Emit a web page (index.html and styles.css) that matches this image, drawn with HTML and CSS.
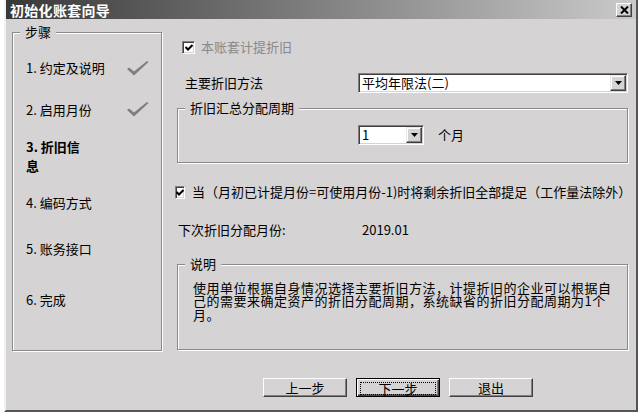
FILE: index.html
```
<!DOCTYPE html>
<html lang="zh-CN">

<head>
    <meta charset="UTF-8">
    <title>初始化账套向导</title>
    <link rel="stylesheet" href="styles.css">
</head>

<body>
    <div class="dialog">
        <div class="titlebar">
            <span class="title">初始化账套向导</span>
            <span class="close-btn">
                <svg width="9" height="8" viewBox="0 0 9 8"><path d="M1 0.5 L8 7.5 M8 0.5 L1 7.5" stroke="#000" stroke-width="2"/></svg>
            </span>
        </div>

        <div class="main">
            <fieldset class="group steps">
                <legend>步骤</legend>
                <ol class="step-list">
                    <li class="step"><span class="step-name">1. 约定及说明</span><svg class="done" width="22" height="15" viewBox="0 0 22 15"><path d="M0 8 L2 6.5 L7 10.5 L20 0 L21.5 1 L7 14.5 Z" fill="#7f7f7f"/></svg></li>
                    <li class="step"><span class="step-name">2. 启用月份</span><svg class="done" width="22" height="15" viewBox="0 0 22 15"><path d="M0 8 L2 6.5 L7 10.5 L20 0 L21.5 1 L7 14.5 Z" fill="#7f7f7f"/></svg></li>
                    <li class="step step-current"><span class="step-name">3. 折旧信<br>息</span></li>
                    <li class="step"><span class="step-name">4. 编码方式</span></li>
                    <li class="step"><span class="step-name">5. 账务接口</span></li>
                    <li class="step"><span class="step-name">6. 完成</span></li>
                </ol>
            </fieldset>

            <div class="settings">
                <div class="check-row first-check is-disabled">
                    <span class="checkbox"><svg width="8" height="7" viewBox="0 0 8 7"><path d="M0.5 3 L3 5.5 L7.5 1" stroke="#000" stroke-width="2" fill="none"/></svg></span>
                    <span>本账套计提折旧</span>
                </div>

                <div class="field-row method-row">
                    <span class="field-label">主要折旧方法</span>
                    <div class="combo combo-wide">
                        <span class="combo-text">平均年限法(二)</span>
                        <span class="combo-btn"><svg width="7" height="4" viewBox="0 0 7 4"><path d="M0 0 H7 L3.5 4 Z" fill="#000"/></svg></span>
                    </div>
                </div>

                <fieldset class="group period">
                    <legend>折旧汇总分配周期</legend>
                    <div class="period-row">
                        <div class="combo combo-small">
                            <span class="combo-text">1</span>
                            <span class="combo-btn"><svg width="7" height="4" viewBox="0 0 7 4"><path d="M0 0 H7 L3.5 4 Z" fill="#000"/></svg></span>
                        </div>
                        <span class="unit">个月</span>
                    </div>
                </fieldset>

                <div class="check-row second-check">
                    <span class="checkbox"><svg width="8" height="7" viewBox="0 0 8 7"><path d="M0.5 3 L3 5.5 L7.5 1" stroke="#000" stroke-width="2" fill="none"/></svg></span>
                    <span class="nowrap">当（月初已计提月份=可使用月份-1)时将剩余折旧全部提足（工作量法除外）</span>
                </div>

                <div class="field-row next-row">
                    <span class="field-label">下次折旧分配月份:</span>
                    <span class="value">2019.01</span>
                </div>

                <fieldset class="group notes">
                    <legend>说明</legend>
                    <p class="notes-text">使用单位根据自身情况选择主要折旧方法，计提折旧的企业可以根据自己的需要来确定资产的折旧分配周期，系统缺省的折旧分配周期为1个月。</p>
                </fieldset>
            </div>
        </div>

        <div class="footer">
            <button class="btn">上一步</button>
            <button class="btn btn-default"><span class="focus">下一步</span></button>
            <button class="btn">退出</button>
        </div>
    </div>
</body>

</html>
```

FILE: styles.css
```
/* Page */
body {
    margin: 0;
    background: #fff;
    font-family: "Noto Sans CJK SC", "Liberation Sans", sans-serif;
    font-size: 13px;
    line-height: 14px;
    color: #000;
}

.dialog {
    width: 634px;
    height: 412px;
    margin-left: 4px;
    box-sizing: border-box;
    border-left: 2px solid #f2f2f2;
    border-right: 2px solid #555;
    border-bottom: 2px solid #555;
    background: #d5d3d3;
    display: flex;
    flex-direction: column;
}

/* Title bar */
.titlebar {
    height: 19px;
    display: flex;
    align-items: center;
    justify-content: space-between;
    padding: 0 4px;
    background: linear-gradient(to right, #383838, #cacaca);
}

.title {
    color: #fff;
    font-weight: bold;
    font-size: 14px;
    letter-spacing: 0.3px;
}

.close-btn {
    width: 16px;
    height: 14px;
    box-sizing: border-box;
    display: flex;
    align-items: center;
    justify-content: center;
    background: #d5d3d3;
    border: 1px solid;
    border-color: #fff #404040 #404040 #fff;
    box-shadow: inset -1px -1px 0 #808080;
}

/* Group boxes */
.group {
    margin: 0;
    padding: 0;
    border: 1px solid #8a8a8a;
    box-shadow: inset 1px 1px 0 #fff, 1px 1px 0 #fff;
    min-width: 0;
}

.group legend {
    margin-left: 7px;
    padding: 0 5px;
    line-height: 14px;
    background: #d5d3d3;
}

.main {
    display: flex;
    gap: 13px;
    padding: 6px 0 0 6px;
}

/* Steps */
.steps {
    width: 150px;
    height: 326px;
    box-sizing: border-box;
}

.step-list {
    list-style: none;
    margin: 0;
    padding: 9px 0 0 13px;
    display: grid;
    grid-template-rows: 40px 43px 50px 43px 50px 52px;
}

.step {
    display: flex;
    align-items: center;
}

.step-name {
    width: 101px;
}

.step-current .step-name {
    font-weight: bold;
    line-height: 19px;
}

/* Settings */
.settings {
    width: 453px;
    display: flex;
    flex-direction: column;
}

.check-row {
    display: flex;
    align-items: center;
    height: 18px;
}

.first-check {
    margin-top: 13px;
    padding-left: 7px;
    gap: 6px;
}

.second-check {
    margin-top: 20px;
    gap: 7px;
}

.is-disabled {
    color: #8a8a8a;
}

.checkbox {
    width: 13px;
    height: 13px;
    box-sizing: border-box;
    display: flex;
    align-items: center;
    justify-content: center;
    background: #fff;
    border: 1px solid;
    border-color: #808080 #fff #fff #808080;
    box-shadow: inset 1px 1px 0 #404040, inset -1px -1px 0 #d5d3d3;
}

.nowrap {
    white-space: nowrap;
}

.field-row {
    display: flex;
    align-items: center;
}

.field-label {
    flex: none;
}

.method-row {
    margin-top: 17px;
    height: 20px;
    padding-left: 10px;
}

.method-row .field-label {
    width: 173px;
}

.next-row {
    margin-top: 20px;
    height: 18px;
    padding-left: 3px;
}

.next-row .field-label {
    width: 184px;
}

/* Combo boxes */
.combo {
    height: 20px;
    box-sizing: border-box;
    display: flex;
    align-items: center;
    background: #fff;
    border: 1px solid;
    border-color: #808080 #fff #fff #808080;
    box-shadow: inset 1px 1px 0 #404040, inset -1px -1px 0 #d5d3d3;
    padding: 1px;
}

.combo-wide {
    width: 270px;
}

.combo-small {
    width: 66px;
}

.combo-text {
    flex: 1;
    padding-left: 2px;
}

.combo-btn {
    width: 16px;
    height: 16px;
    box-sizing: border-box;
    display: flex;
    align-items: center;
    justify-content: center;
    background: #d5d3d3;
    border: 1px solid;
    border-color: #e8e8e8 #404040 #404040 #e8e8e8;
    box-shadow: inset -1px -1px 0 #808080, inset 1px 1px 0 #fff;
}

/* Period group */
.period {
    margin: 8px 0 0 2px;
    width: 451px;
    box-sizing: border-box;
}

.period-row {
    display: flex;
    align-items: center;
    padding: 10px 0 17px 180px;
}

.unit {
    margin-left: 14px;
}

/* Notes group */
.notes {
    margin: 18px 0 0 2px;
    width: 451px;
    box-sizing: border-box;
}

.notes-text {
    margin: 0;
    width: 421px;
    padding: 10px 0 28px 15px;
    line-height: 13.4px;
    letter-spacing: 0.5px;
}

/* Buttons */
.footer {
    display: flex;
    gap: 9px;
    margin-top: 27px;
    padding-left: 257px;
}

.btn {
    width: 84px;
    height: 19px;
    box-sizing: border-box;
    padding: 0;
    font-family: inherit;
    font-size: 13px;
    line-height: 14px;
    color: #000;
    background: #d5d3d3;
    border: 1px solid;
    border-color: #fff #404040 #404040 #fff;
    box-shadow: inset -1px -1px 0 #808080;
}

.btn-default {
    border-color: #000;
    box-shadow: inset 1px 1px 0 #fff, inset -1px -1px 0 #404040, inset -2px -2px 0 #808080;
    padding: 3px;
}

.focus {
    display: block;
    height: 11px;
    line-height: 11px;
    border: 1px dotted #000;
}
```
